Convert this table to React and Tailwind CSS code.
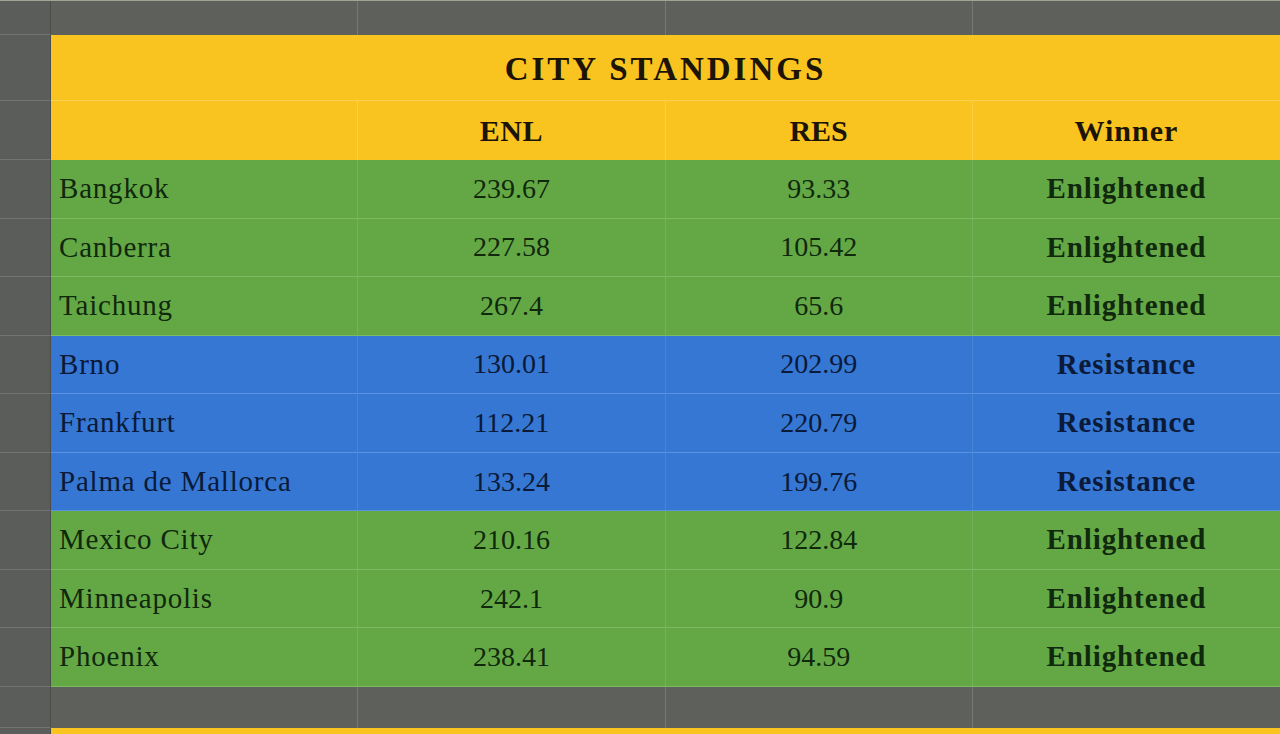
const rows = [
  { city: 'Bangkok', enl: '239.67', res: '93.33', winner: 'Enlightened' },
  { city: 'Canberra', enl: '227.58', res: '105.42', winner: 'Enlightened' },
  { city: 'Taichung', enl: '267.4', res: '65.6', winner: 'Enlightened' },
  { city: 'Brno', enl: '130.01', res: '202.99', winner: 'Resistance' },
  { city: 'Frankfurt', enl: '112.21', res: '220.79', winner: 'Resistance' },
  { city: 'Palma de Mallorca', enl: '133.24', res: '199.76', winner: 'Resistance' },
  { city: 'Mexico City', enl: '210.16', res: '122.84', winner: 'Enlightened' },
  { city: 'Minneapolis', enl: '242.1', res: '90.9', winner: 'Enlightened' },
  { city: 'Phoenix', enl: '238.41', res: '94.59', winner: 'Enlightened' },
]

const serif = { fontFamily: '"Liberation Serif", "DejaVu Serif", serif' }

function Gutter({ className = '' }) {
  return <div className={`bg-[#5b5d5a] border-r border-r-[#4b4d4a] border-b border-b-[#727470] ${className}`} />
}

function DataRow({ r }) {
  const green = r.winner === 'Enlightened'
  const bg = green ? 'bg-[#64a846] border-b-[#7cbb62]' : 'bg-[#3577d3] border-b-[#5b93e2]'
  const ink = green ? 'text-[#10280c]' : 'text-[#0b1a38]'
  const cell = `flex items-center border-b ${bg} ${ink}`
  return (
    <>
      <Gutter className="h-[58.55px]" />
      <div className={`${cell} pl-2 text-[29px] tracking-[0.8px] border-r border-r-white/10`}>{r.city}</div>
      <div className={`${cell} justify-center text-[28px] border-r border-r-white/10`}>{r.enl}</div>
      <div className={`${cell} justify-center text-[28px] border-r border-r-white/10`}>{r.res}</div>
      <div className={`${cell} justify-center text-[29px] font-bold tracking-[0.9px]`}>{r.winner}</div>
    </>
  )
}

export default function App() {
  return (
    <div className="h-[734px] w-[1280px] overflow-hidden bg-[#5b5d5a] border-t border-t-[#a3a395]" style={serif}>
      <div className="grid grid-cols-[51px_1fr_1fr_1fr_1fr]">
        {/* empty top row */}
        <Gutter className="h-[34px]" />
        <div className="bg-[#5e605c] border-r border-r-[#767873]" />
        <div className="bg-[#5e605c] border-r border-r-[#767873]" />
        <div className="bg-[#5e605c] border-r border-r-[#767873]" />
        <div className="bg-[#5e605c]" />

        {/* title */}
        <Gutter className="h-[66px]" />
        <div className="col-span-4 flex items-center justify-center bg-[#f9c420] border-b border-b-[#fbd04c] text-[33px] font-bold tracking-[3px] text-[#1c1406] pt-1">
          CITY STANDINGS
        </div>

        {/* headers */}
        <Gutter className="h-[59px]" />
        <div className="bg-[#f9c420] border-r border-r-[#fbcf45]" />
        <div className="flex items-center justify-center bg-[#f9c420] border-r border-r-[#fbcf45] text-[30px] font-bold text-[#1c1406] tracking-[0.5px]">ENL</div>
        <div className="flex items-center justify-center bg-[#f9c420] border-r border-r-[#fbcf45] text-[30px] font-bold text-[#1c1406]">RES</div>
        <div className="flex items-center justify-center bg-[#f9c420] text-[30px] font-bold text-[#1c1406] tracking-[1px]">Winner</div>

        {rows.map((r) => (
          <DataRow key={r.city} r={r} />
        ))}

        {/* empty row below */}
        <Gutter className="h-[41px]" />
        <div className="bg-[#5e605c] border-r border-r-[#767873]" />
        <div className="bg-[#5e605c] border-r border-r-[#767873]" />
        <div className="bg-[#5e605c] border-r border-r-[#767873]" />
        <div className="bg-[#5e605c]" />

        {/* next table starts */}
        <Gutter className="h-[40px]" />
        <div className="col-span-4 bg-[#f9c420]" />
      </div>
    </div>
  )
}
